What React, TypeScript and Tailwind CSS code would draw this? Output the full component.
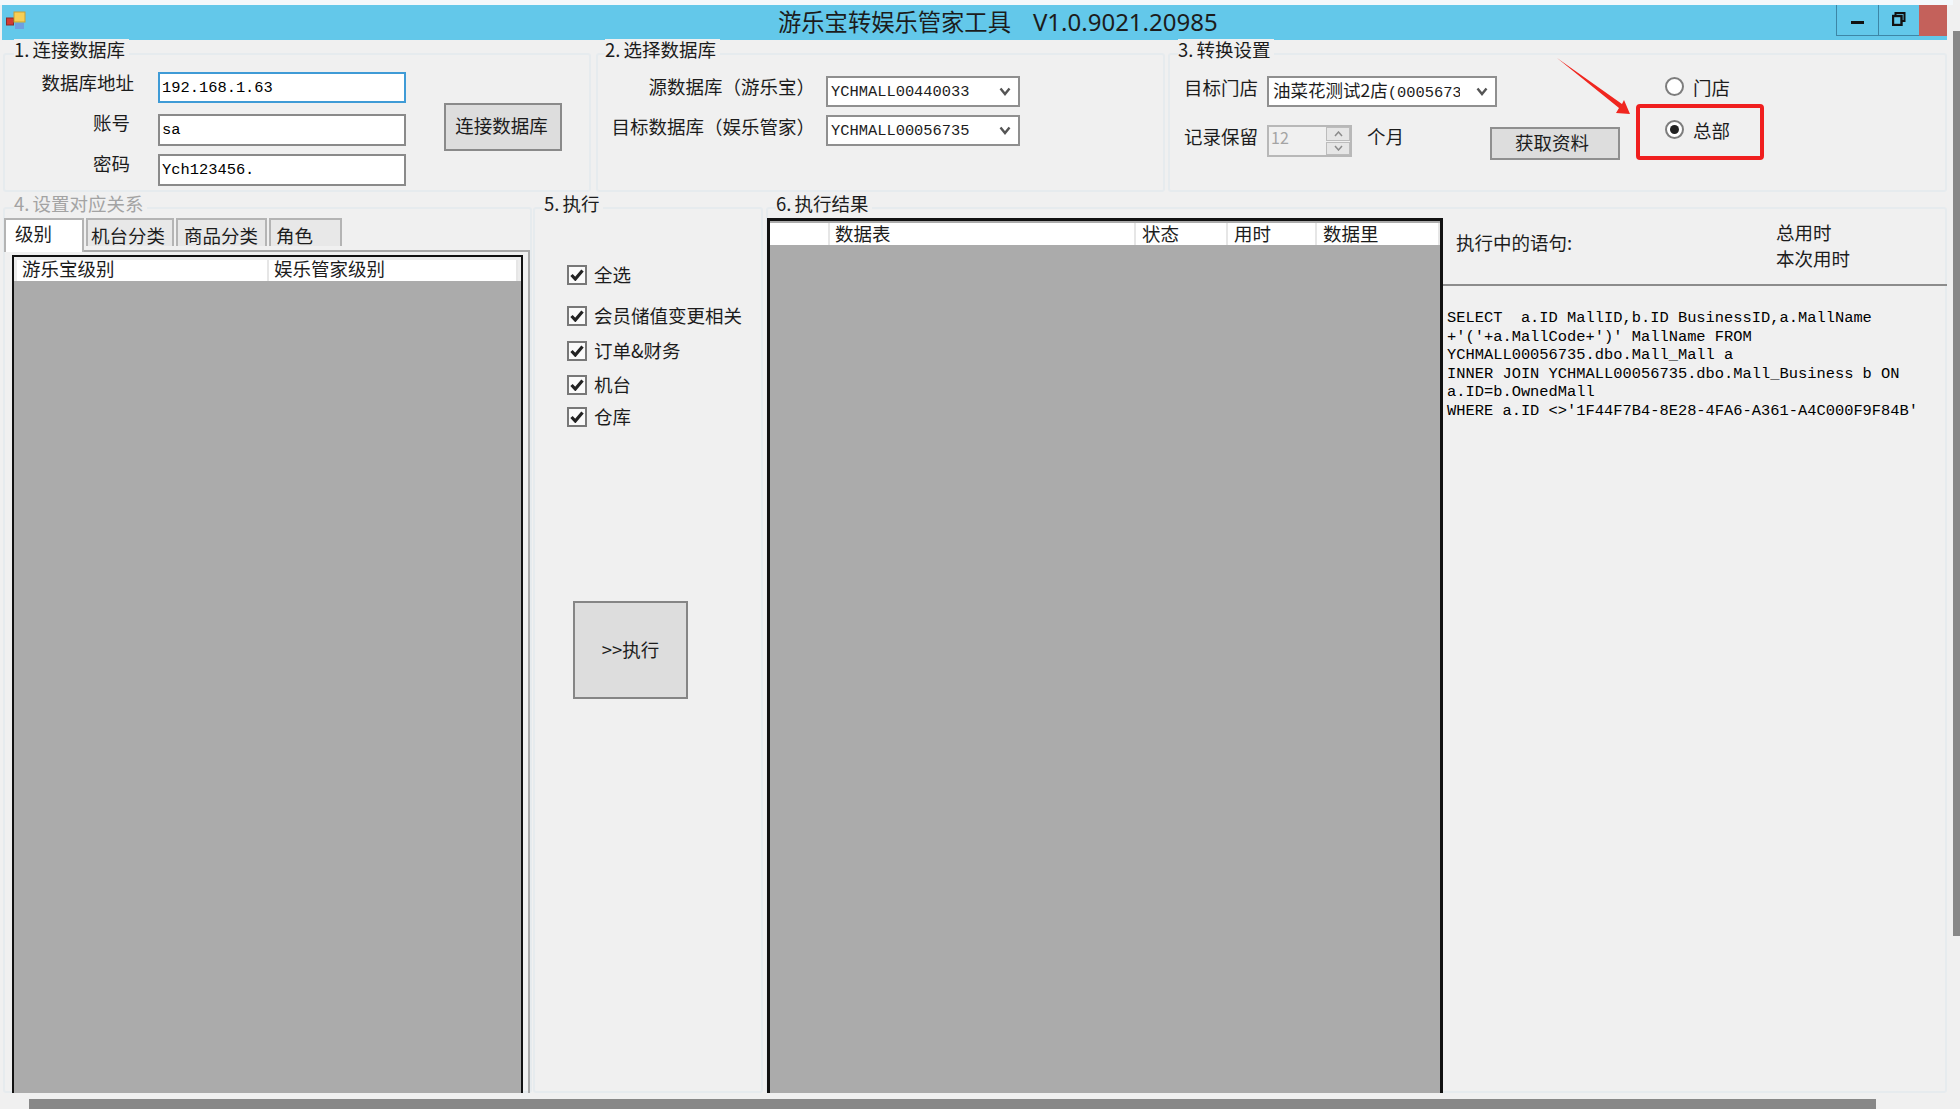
const mono = "font-['Liberation_Mono','Noto_Sans_CJK_SC',monospace] text-[15.4px]";

const Group = ({
  label,
  num,
  muted,
  legend = "ml-[9px]",
  className,
  children,
}: {
  label: string;
  num: string;
  muted?: boolean;
  legend?: string;
  className: string;
  children: React.ReactNode;
}) => (
  <div className={`relative flex flex-col shrink-0 border-2 border-[#e6ebee] rounded-[3px] ${className}`}>
    <div
      className={`-mt-[16px] h-[21px] leading-[20px] w-fit pr-1 bg-[#f0f0f0] whitespace-nowrap ${legend} ${
        muted ? "text-[#a3a3a3]" : ""
      }`}
    >
      <span className="mr-[3px]">{num}</span>
      {label}
    </div>
    {children}
  </div>
);

const Chevron = () => (
  <svg width="12" height="9" viewBox="0 0 12 9" className="shrink-0">
    <path d="M1.5 1.5 6 7l4.500-5.500" fill="none" stroke="#555" strokeWidth="2.400" />
  </svg>
);

const Field = ({ value, focused, className }: { value: string; focused?: boolean; className: string }) => (
  <input
    readOnly
    value={value}
    className={`w-[248px] px-[2px] bg-white border-2 outline-none text-black ${mono} ${
      focused ? "border-[#3f9bd6]" : "border-[#8a8a8a]"
    } ${className}`}
  />
);

const Combo = ({ value }: { value: string }) => (
  <div className={`w-[194px] h-[31px] pl-[3px] pr-[7px] flex items-center justify-between bg-white border-2 border-[#8f8f8f] ${mono}`}>
    <span className="pt-[3px]">{value}</span>
    <Chevron />
  </div>
);

const Check = ({ label, className }: { label: string; className: string }) => (
  <div className={`flex items-center h-[20px] ${className}`}>
    <span className="w-[20px] h-[20px] mr-[7px] flex items-center justify-center bg-[#fafafa] border-2 border-[#787878]">
      <svg width="14" height="12" viewBox="0 0 14 12">
        <path d="M1.500 6 5.300 10 12.500 1.500" fill="none" stroke="#222" strokeWidth="3.200" />
      </svg>
    </span>
    <span className="-mt-[1px] whitespace-nowrap">{label}</span>
  </div>
);

const Radio = ({ label, checked, className }: { label: string; checked?: boolean; className?: string }) => (
  <div className={`flex items-center h-[24px] ${className ?? ""}`}>
    <span className="-mt-[2px] w-[19px] h-[19px] mr-[9px] rounded-full bg-white border-2 border-[#7d7d7d] flex items-center justify-center">
      {checked && <span className="w-[9px] h-[9px] rounded-full bg-[#222]" />}
    </span>
    <span className="mt-[2px]">{label}</span>
  </div>
);

const Tab = ({ label, className }: { label: string; className: string }) => (
  <div className={`mt-[4px] h-[28px] leading-[30px] mr-[2px] bg-[#e8e8e8] border-2 border-b-0 border-[#b4b4b4] ${className}`}>
    {label}
  </div>
);

const Cell = ({ label, className }: { label: string; className: string }) => (
  <div className={`h-full border-r-2 border-[#e6e6e6] whitespace-nowrap ${className}`}>{label}</div>
);

const sql = `SELECT  a.ID MallID,b.ID BusinessID,a.MallName
+'('+a.MallCode+')' MallName FROM
YCHMALL00056735.dbo.Mall_Mall a
INNER JOIN YCHMALL00056735.dbo.Mall_Business b ON
a.ID=b.OwnedMall
WHERE a.ID <>'1F44F7B4-8E28-4FA6-A361-A4C000F9F84B'`;

export default function App() {
  return (
    <div className="flex w-[1960px] h-[1109px] overflow-hidden bg-[#f0f0f0] text-[#1c1c1c] text-[18.5px] font-['Noto_Sans_CJK_SC','Liberation_Sans',sans-serif]">
      <div className="w-[1953px] shrink-0">
        <div className="h-[5px] bg-[#f3f8fb]" />

        {/* title bar */}
        <div className="ml-[2px] w-[1945px] h-[35px] flex items-start bg-[#63c8ea]">
          <svg width="22" height="20" viewBox="0 0 22 20" className="ml-[4px] mt-[6px] shrink-0">
            <rect x="0.500" y="7" width="7" height="7" fill="#d23a34" stroke="#8c2a28" />
            <rect x="8" y="1" width="11" height="10" fill="#f6cf55" stroke="#c9a032" />
            <rect x="9" y="12" width="9" height="6" fill="#6f9fe0" />
          </svg>
          <div className="ml-[750px] h-[35px] leading-[33px] text-[23.300px] whitespace-nowrap">
            游乐宝转娱乐管家工具
            <span className="ml-[22px] font-['Noto_Sans',sans-serif] text-[24px]">V1.0.9021.20985</span>
          </div>
          <div className="ml-auto flex h-[31px]">
            <div className="w-[42px] flex items-center justify-center border-l border-b border-[#3d86a6]">
              <span className="mt-[5px] w-[13px] h-[3px] bg-[#111]" />
            </div>
            <div className="w-[41px] flex items-center justify-center border-l border-b border-[#3d86a6]">
              <svg width="14" height="14" viewBox="0 0 14 14" className="-mt-[3px]">
                <path d="M3.500 3V1h9v8h-2.500" fill="none" stroke="#111" strokeWidth="2" />
                <rect x="1" y="4" width="8.500" height="9" fill="none" stroke="#111" strokeWidth="2.400" />
              </svg>
            </div>
            <div className="w-[28px] bg-[#c4615b]" />
          </div>
        </div>

        {/* top row */}
        <div className="flex mt-[13px] ml-[3px] h-[139px]">
          <Group num="1." label="连接数据库" className="w-[588px]">
            <div className="flex pt-[12px]">
              <div className="w-[401px]">
                <div className="flex items-start">
                  <span className="w-[129px] mr-[24px] -mt-[2px] leading-[24px] text-right">数据库地址</span>
                  <Field value="192.168.1.63" focused className="h-[31px]" />
                </div>
                <div className="flex items-start mt-[11px]">
                  <span className="w-[125px] mr-[28px] -mt-[4px] leading-[24px] text-right">账号</span>
                  <Field value="sa" className="h-[32px]" />
                </div>
                <div className="flex items-start mt-[8px]">
                  <span className="w-[125px] mr-[28px] -mt-[3px] leading-[24px] text-right">密码</span>
                  <Field value="Ych123456." className="h-[32px]" />
                </div>
              </div>
              <button className="ml-[38px] mt-[31px] w-[118px] h-[48px] pr-[3px] pb-[2px] bg-[#dddddd] border-2 border-[#8a8a8a]">连接数据库</button>
            </div>
          </Group>

          <Group num="2." label="选择数据库" legend="ml-[7px]" className="ml-[5px] w-[569px]">
            <div className="pt-[16px]">
              <div className="flex items-start">
                <span className="w-[217px] mr-[11px] -mt-[2px] leading-[24px] text-right whitespace-nowrap">源数据库（游乐宝）</span>
                <Combo value="YCHMALL00440033" />
              </div>
              <div className="flex items-start mt-[8px]">
                <span className="w-[217px] mr-[11px] -mt-[1px] leading-[24px] text-right whitespace-nowrap">目标数据库（娱乐管家）</span>
                <Combo value="YCHMALL00056735" />
              </div>
            </div>
          </Group>

          <Group num="3." label="转换设置" legend="ml-[8px]" className="ml-[3px] w-[779px]">
            <div className="flex">
              <div className="w-[450px] pt-[16px] pl-[14px]">
                <div className="flex items-start">
                  <span className="w-[74px] mr-[9px] -mt-[1px] leading-[24px]">目标门店</span>
                  <div className="w-[230px] h-[31px] pl-[4px] pr-[7px] flex items-center justify-between bg-white border-2 border-[#8f8f8f]">
                    <span className="w-[187px] overflow-hidden whitespace-nowrap text-[17.500px] leading-[27px]">
                      油菜花测试2店<span className={mono}>(00056735)</span>
                    </span>
                    <Chevron />
                  </div>
                </div>
                <div className="flex items-start mt-[18px]">
                  <span className="w-[74px] mr-[9px] -mt-[1px] leading-[24px]">记录保留</span>
                  <div className="w-[85px] h-[32px] flex justify-between border-2 border-[#b8b8b8] text-[#a4a4a4] text-[16px] leading-[21px] pl-[2px]">
                    12
                    <div className="w-[24px] flex flex-col gap-[1px]">
                      <span className="h-[14px] flex items-center justify-center bg-[#e6e6e6] border border-[#bcbcbc]">
                        <svg width="9" height="6" viewBox="0 0 9 6"><path d="M1 5 4.500 1 8 5" fill="none" stroke="#8b8b8b" strokeWidth="1.500" /></svg>
                      </span>
                      <span className="h-[14px] flex items-center justify-center bg-[#e6e6e6] border border-[#bcbcbc]">
                        <svg width="9" height="6" viewBox="0 0 9 6"><path d="M1 1 4.500 5 8 1" fill="none" stroke="#8b8b8b" strokeWidth="1.500" /></svg>
                      </span>
                    </div>
                  </div>
                  <span className="ml-[15px] -mt-[1px] w-[36px] leading-[24px] whitespace-nowrap">个月</span>
                  <button className="ml-[87px] mt-[2px] w-[130px] h-[33px] shrink-0 pr-[6px] pb-[2px] bg-[#dddddd] border-2 border-[#8f8f8f]">获取资料</button>
                </div>
              </div>
              <div className="ml-[45px] pt-[15px]">
                <Radio label="门店" />
                <Radio label="总部" checked className="mt-[19px]" />
              </div>
            </div>
            {/* annotation drawn on top of the screenshot */}
            <div className="absolute left-[466px] top-[49px] w-[128px] h-[56px] border-4 border-[#f01f1f] rounded-[4px]" />
            <svg width="90" height="70" viewBox="0 0 90 70" className="absolute left-[380px] -top-[5px]">
              <polygon points="7,8 69,58 66,63 80,64 74,50 72,54" fill="#f0261f" />
            </svg>
          </Group>
        </div>

        {/* bottom row */}
        <div className="flex mt-[15px] ml-[3px] h-[886px]">
          <Group num="4." label="设置对应关系" muted className="w-[529px]">
            <div className="relative z-10 flex items-start h-[36px] -ml-[1px]">
              <div className="mr-[2px] mt-[4px] w-[80px] h-[34px] leading-[26px] pl-[9px] bg-white border-2 border-b-0 border-[#b4b4b4]">级别</div>
              <Tab label="机台分类" className="w-[88px] pl-[3px]" />
              <Tab label="商品分类" className="w-[91px] pl-[6px]" />
              <Tab label="角色" className="w-[73px] pl-[5px]" />
            </div>
            <div className="flex-1 min-h-0 pl-[7px] pr-[5px] pt-[3px] -mb-[2px] border-t-2 border-r-2 border-[#a8a8a8]">
              <div className="h-full bg-[#ababab] border-x-2 border-t-2 border-[#111]">
                <div className="flex h-[24px] bg-white border-t-[3px] border-x-[3px] border-[#ececec]">
                  <Cell label="游乐宝级别" className="w-[252px] pl-[5px] leading-[17px]" />
                  <Cell label="娱乐管家级别" className="flex-1 pl-[5px] leading-[17px] border-r-0" />
                </div>
              </div>
            </div>
          </Group>

          <Group num="5." label="执行" className="ml-[1px] w-[230px]">
            <div className="pl-[32px] pt-[51px]">
              <Check label="全选" className="" />
              <Check label="会员储值变更相关" className="mt-[21px]" />
              <Check label="订单&财务" className="mt-[15px]" />
              <Check label="机台" className="mt-[14px]" />
              <Check label="仓库" className="mt-[12px]" />
              <button className="ml-[6px] mt-[174px] w-[115px] h-[98px] bg-[#dddddd] border-2 border-[#858585]">&gt;&gt;执行</button>
            </div>
          </Group>

          <Group num="6." label="执行结果" legend="ml-[8px]" className="ml-[3px] w-[1181px]">
            <div className="flex flex-1 min-h-0 -mb-[2px]">
              <div className="-ml-[1px] mt-[4px] w-[676px] bg-[#ababab] border-x-[3px] border-t-[3px] border-[#111]">
                <div className="flex h-[22px] mt-[2px] bg-white">
                  <Cell label="" className="w-[60px]" />
                  <Cell label="数据表" className="w-[306px] pl-[5px] leading-[20px]" />
                  <Cell label="状态" className="w-[92px] pl-[6px] leading-[20px]" />
                  <Cell label="用时" className="w-[89px] pl-[6px] leading-[20px]" />
                  <Cell label="数据里" className="flex-1 pl-[6px] leading-[20px] border-r-0" />
                </div>
              </div>
              <div className="flex-1">
                <div className="flex h-[72px] border-b-2 border-[#8c8c8c] -mr-[2px]">
                  <span className="ml-[13px] mt-[16px] w-[320px] leading-[24px]">执行中的语句:</span>
                  <div className="mt-[5px] leading-[26px]">
                    <div>总用时</div>
                    <div>本次用时</div>
                  </div>
                </div>
                <pre className={`pl-[4px] pt-[23px] leading-[18.500px] text-black ${mono}`}>{sql}</pre>
              </div>
            </div>
          </Group>
        </div>

        {/* horizontal scrollbar */}
        <div className="mt-[6px] ml-[29px] w-[1847px] h-[10px] bg-[#888888]" />
      </div>

      {/* vertical scrollbar */}
      <div className="w-[7px] pt-[31px]">
        <div className="h-[905px] bg-[#888888]" />
      </div>
    </div>
  );
}
